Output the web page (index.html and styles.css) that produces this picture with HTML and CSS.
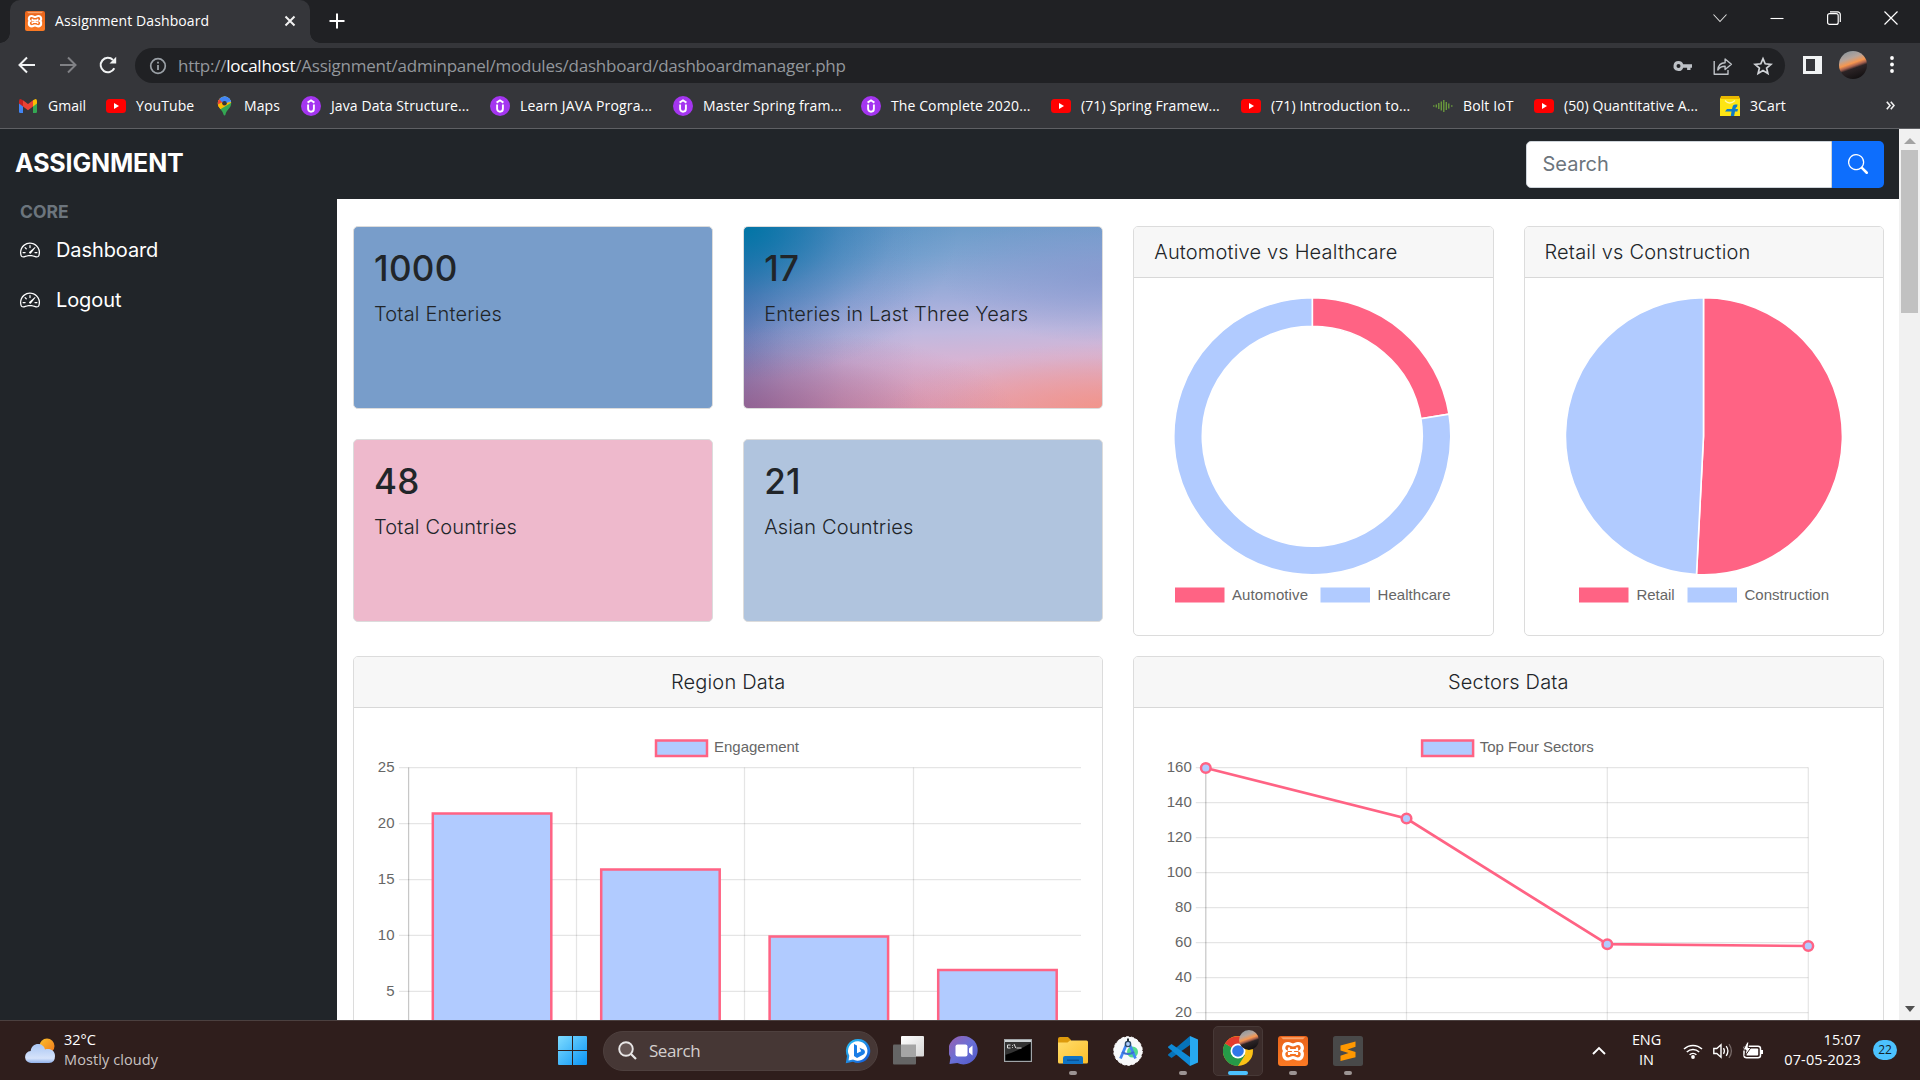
FILE: index.html
```
<!DOCTYPE html>
<html lang="en">
<head>
<meta charset="utf-8">
<title>Assignment Dashboard</title>
<link rel="stylesheet" href="styles.css">
</head>
<body>
<svg class="defs" width="0" height="0" aria-hidden="true">
  <defs>
    <linearGradient id="g-orange" x1="0" y1="0" x2="0" y2="1"><stop offset="0" stop-color="#e9631a"/><stop offset="1" stop-color="#fb7a24"/></linearGradient>
    <linearGradient id="g-win" x1="0" y1="0" x2="1" y2="1"><stop offset="0" stop-color="#7fdcff"/><stop offset="1" stop-color="#0a94f5"/></linearGradient>
    <linearGradient id="g-bing" x1="0" y1="0" x2="1" y2="1"><stop offset="0" stop-color="#29c5f6"/><stop offset="1" stop-color="#1450d2"/></linearGradient>
    <linearGradient id="g-chat" x1="0" y1="0" x2="1" y2="1"><stop offset="0" stop-color="#9a5fae"/><stop offset=".5" stop-color="#6a70d6"/><stop offset="1" stop-color="#4f57c8"/></linearGradient>
    <linearGradient id="g-folder" x1="0" y1="0" x2="1" y2="1"><stop offset="0" stop-color="#ffdc6b"/><stop offset="1" stop-color="#fcbf2a"/></linearGradient>
    <linearGradient id="g-white" x1="0" y1="0" x2="1" y2="1"><stop offset="0" stop-color="#ffffff"/><stop offset="1" stop-color="#d5d5d5"/></linearGradient>
    <linearGradient id="g-sun" x1="0" y1="0" x2="1" y2="1"><stop offset="0" stop-color="#fcc02c"/><stop offset="1" stop-color="#f0761a"/></linearGradient>
    <linearGradient id="g-cloud" x1="0" y1="0" x2="0" y2="1"><stop offset="0" stop-color="#a9c6f4"/><stop offset=".75" stop-color="#d6e3fa"/><stop offset="1" stop-color="#8fb0ea"/></linearGradient>
    <linearGradient id="g-sunset" x1=".45" y1="0" x2=".55" y2="1"><stop offset=".12" stop-color="#8d979d"/><stop offset=".3" stop-color="#b5a49b"/><stop offset=".43" stop-color="#f7964e"/><stop offset=".5" stop-color="#a5604e"/><stop offset=".56" stop-color="#2c2426"/><stop offset=".9" stop-color="#0b0a0b"/></linearGradient>
    <symbol id="xampp" viewBox="0 0 30 30">
      <rect width="30" height="30" rx="3" fill="url(#g-orange)"/><path d="M3 1.200h24l-2 2H5z" fill="#f9a36b"/>
      <path d="M10 7.500c2.500 0 3.300 1.500 5 1.500s2.500-1.500 5-1.500c5 0 5.200 6 2.800 7.500 2.400 1.500 2.200 8-2.800 8-2.500 0-3.300-1.500-5-1.500s-2.500 1.500-5 1.500c-5 0-5.200-6.500-2.800-8C4.800 13.500 5 7.500 10 7.500z" fill="none" stroke="#fff" stroke-width="3.200"/>
      <path d="M11 11.500v2.500h8v-2.500M15 14v3M11 19v-2h8v2" fill="none" stroke="#fff" stroke-width="2.200"/>
    </symbol>
    <symbol id="yt" viewBox="0 0 20 20"><rect y="3" width="20" height="14" rx="3.500" fill="#f00"/><path d="M8 7l5 3-5 3z" fill="#fff"/></symbol>
    <symbol id="udemy" viewBox="0 0 20 20"><circle cx="10" cy="10" r="10" fill="#a435f0"/><path d="M6.600 6.600L10 4.300l3.400 2.300M7.100 8.600v4.200a2.900 2.900 0 0 0 5.800 0V8.600" fill="none" stroke="#fff" stroke-width="1.900"/></symbol>
    <symbol id="gmail" viewBox="0 0 20 20"><path d="M1 5v10.800q0 1.200 1.200 1.200H5V8z" fill="#4285f4"/><path d="M19 5v10.800q0 1.200-1.200 1.200H15V8z" fill="#34a853"/><path d="M15 4.300L17 3.200q2-.5 2 2V7.500L15 10.500z" fill="#fbbc04"/><path d="M5 4.300L10 8l5-3.700v6.200L10 14.200 5 10.500z" fill="#ea4335"/><path d="M5 4.300L3 3.200Q1 2.700 1 5.200V7.500l4 3z" fill="#c5221f"/></symbol>
    <symbol id="maps" viewBox="0 0 20 20">
      <clipPath id="pin"><path d="M10.500 .5a6.700 6.700 0 0 1 6.700 6.700c0 5-5 6.500-5.700 11.300-.2 1.300-1.700 1.300-2 0C8.700 13.700 3.800 12.200 3.800 7.200A6.700 6.700 0 0 1 10.500.5z"/></clipPath>
      <g clip-path="url(#pin)"><path d="M0 0h20v20H0z" fill="#34a853"/><path d="M0 0h20v5L5 14H0z" fill="#fbbc04"/><path d="M4 0h16v6l-3-1-7 3z" fill="#4285f4"/><path d="M10 0h8v6l-6 .5z" fill="#5b9af7"/><path d="M0 2l5 0 6 6-5 4-6-5z" fill="#ea4335"/><path d="M3 9l3.500 4 4-5-3-1.500z" fill="#fbbc04"/><path d="M5 3L12 0l6 4-7.500 3L8 6z" fill="#4285f4"/></g><circle cx="10.500" cy="7.200" r="2.300" fill="#35363a"/>
    </symbol>
    <symbol id="bolt" viewBox="0 0 20 20"><path d="M.8 9.300v1.400M3.300 8.500v3M5.800 7v6M8.300 5.500v9M10.800 4v12M13.300 6v8M15.800 7.500v5M18.800 9.300v1.400" stroke="#6da03c" stroke-width="1.300"/></symbol>
    <symbol id="flip" viewBox="0 0 20 20"><path d="M0 2h20v18H0z" fill="#fde514"/><path d="M1 0h18l1 3H0z" fill="#e9b800"/><path d="M5 4.500q4.500 5 10 0" stroke="#fff6a8" stroke-width="1.300" fill="none"/><path d="M17.500 8.500h-2.200q-2.500 0-2.900 3L12 13H7l-2 2.500h6.500L10.800 20h3.300l.9-4.500h2.400l.6-2.500h-2.500q.2-2 1.500-2z" fill="#0f7ac6"/></symbol>
    <symbol id="gauge" viewBox="0 0 16 16"><path d="M8 4a.5.5 0 0 1 .5.5V6a.5.5 0 0 1-1 0V4.500A.5.5 0 0 1 8 4zM3.732 5.732a.5.5 0 0 1 .707 0l.915.914a.5.5 0 1 1-.708.708l-.914-.915a.5.5 0 0 1 0-.707zM2 10a.5.5 0 0 1 .5-.5h1.586a.5.5 0 0 1 0 1H2.500A.5.5 0 0 1 2 10zm9.500 0a.5.5 0 0 1 .5-.5h1.500a.5.5 0 0 1 0 1H12a.5.5 0 0 1-.5-.5zm.754-4.246a.389.389 0 0 0-.527-.02L7.547 9.310a.91.91 0 1 0 1.302 1.258l3.434-4.297a.389.389 0 0 0-.029-.518z"/><path fill-rule="evenodd" d="M0 10a8 8 0 1 1 15.547 2.661c-.442 1.253-1.845 1.602-2.932 1.250C11.309 13.488 9.475 13 8 13c-1.474 0-3.310.488-4.615.911-1.087.352-2.490.003-2.932-1.250A7.988 7.988 0 0 1 0 10zm8-7a7 7 0 0 0-6.603 9.329c.203.575.923.876 1.680.63C4.397 12.533 6.358 12 8 12s3.604.532 4.923.96c.757.245 1.477-.056 1.680-.631A7 7 0 0 0 8 3z"/></symbol>
  </defs>
</svg>

<header class="browser">
  <div class="tabstrip">
    <div class="tab">
      <svg class="favicon" width="20" height="20"><use href="#xampp"/></svg>
      <span class="tab-title">Assignment Dashboard</span>
      <svg class="tab-close" width="12" height="12" viewBox="0 0 12 12"><path d="M1.500 1.500l9 9M10.500 1.500l-9 9" stroke="#f1f1f1" stroke-width="2"/></svg>
    </div>
    <svg class="newtab" width="16" height="16" viewBox="0 0 16 16"><path d="M8 .5v15M.5 8h15" stroke="#fff" stroke-width="2"/></svg>
    <div class="wincontrols">
      <svg width="14" height="14" viewBox="0 0 14 14"><path d="M.5 3.500l6.500 7 6.500-7" fill="none" stroke="#ddd" stroke-width="1.100"/></svg>
      <svg width="14" height="14" viewBox="0 0 14 14"><path d="M.5 7.500h13" stroke="#fff" stroke-width="1.100"/></svg>
      <svg width="14" height="14" viewBox="0 0 14 14"><rect x=".6" y="2.600" width="10.600" height="10.800" rx="2" fill="none" stroke="#fff" stroke-width="1.200"/><path d="M3 .8h7.500a2.800 2.800 0 0 1 2.800 2.800v7.500" fill="none" stroke="#fff" stroke-width="1.200"/></svg>
      <svg width="14" height="14" viewBox="0 0 14 14"><path d="M.5.500l13 13M13.500.500l-13 13" stroke="#fff" stroke-width="1.200"/></svg>
    </div>
  </div>
  <div class="toolbar">
    <svg width="18" height="18" viewBox="0 0 18 18"><path d="M17 9H2M9 1.500L1.500 9 9 16.500" fill="none" stroke="#f1f3f4" stroke-width="2"/></svg>
    <svg width="18" height="18" viewBox="0 0 18 18"><path d="M1 9h15M9 1.500L16.500 9 9 16.500" fill="none" stroke="#808185" stroke-width="2"/></svg>
    <svg width="18" height="18" viewBox="0 0 18 18"><path d="M15.300 12.300A7.200 7.200 0 1 1 14 4" fill="none" stroke="#f1f3f4" stroke-width="2"/><path d="M17.200 .8v6.700h-6.700z" fill="#f1f3f4"/></svg>
    <div class="omnibox">
      <svg width="18" height="18" viewBox="0 0 18 18"><circle cx="9" cy="9" r="7.300" fill="none" stroke="#9aa0a6" stroke-width="1.700"/><path d="M9 8v5M9 4.800v1.800" stroke="#9aa0a6" stroke-width="1.800"/></svg>
      <span class="url">http://<b>localhost</b>/Assignment/adminpanel/modules/dashboard/dashboardmanager.php</span>
      <div class="omni-icons">
        <svg width="20" height="20" viewBox="0 0 20 20"><path fill-rule="evenodd" d="M5.500 5a5 5 0 0 1 4.700 3.300H19v3.400h-1.500V14h-3.400v-2.300h-3.900A5 5 0 1 1 5.500 5zm0 3a2 2 0 1 0 0 4 2 2 0 0 0 0-4z" fill="#bdc1c6"/></svg>
        <svg width="20" height="20" viewBox="0 0 20 20"><path d="M1.200 5v13.200H15V14M4.800 14c.4-5 3-7.200 7.300-7.300V3l6.300 5.300-6.300 5.200v-3.300c-3.500 0-5.500 1-7.300 3.800z" fill="none" stroke="#bdc1c6" stroke-width="1.400" stroke-linejoin="round"/></svg>
        <svg width="20" height="20" viewBox="0 0 20 20"><path d="M10 2.600l2.200 5.200 5.700.5-4.300 3.700 1.300 5.500L10 14.600l-4.900 2.900L6.400 12 2.100 8.300l5.700-.5z" fill="none" stroke="#d0d3d7" stroke-width="1.700"/></svg>
      </div>
    </div>
    <svg class="panel" width="19" height="18" viewBox="0 0 19 18"><path fill-rule="evenodd" d="M0 0h19v18H0zM3 3v12h9V3z" fill="#f1f3f4"/></svg>
    <svg class="avatar" width="28" height="28" viewBox="0 0 28 28"><clipPath id="av"><circle cx="14" cy="14" r="14"/></clipPath><g clip-path="url(#av)"><rect x="-8" y="-6" width="44" height="42" fill="url(#g-sunset)" transform="rotate(-14 14 14)"/></g></svg>
    <svg class="dots" width="4" height="17" viewBox="0 0 4 17"><circle cx="2" cy="2" r="1.900" fill="#fff"/><circle cx="2" cy="8.500" r="1.900" fill="#fff"/><circle cx="2" cy="15" r="1.900" fill="#fff"/></svg>
  </div>
  <nav class="bookmarks">
    <span class="bm"><svg><use href="#gmail"/></svg>Gmail</span>
    <span class="bm"><svg><use href="#yt"/></svg>YouTube</span>
    <span class="bm"><svg><use href="#maps"/></svg>Maps</span>
    <span class="bm"><svg><use href="#udemy"/></svg>Java Data Structure...</span>
    <span class="bm"><svg><use href="#udemy"/></svg>Learn JAVA Progra...</span>
    <span class="bm"><svg><use href="#udemy"/></svg>Master Spring fram...</span>
    <span class="bm"><svg><use href="#udemy"/></svg>The Complete 2020...</span>
    <span class="bm"><svg><use href="#yt"/></svg>(71) Spring Framew...</span>
    <span class="bm"><svg><use href="#yt"/></svg>(71) Introduction to...</span>
    <span class="bm"><svg><use href="#bolt"/></svg>Bolt IoT</span>
    <span class="bm"><svg><use href="#yt"/></svg>(50) Quantitative A...</span>
    <span class="bm"><svg><use href="#flip"/></svg>3Cart</span>
    <svg class="more" width="9" height="9" viewBox="0 0 9 9"><path d="M.8.800l3.200 3.700L.8 8.200M4.800.800L8 4.500 4.800 8.200" fill="none" stroke="#f1f1f1" stroke-width="1.600"/></svg>
  </nav>
</header>

<div class="viewport">
  <div class="page">
    <div class="navbar">
      <span class="brand">ASSIGNMENT</span>
      <div class="search">
        <div class="search-input">Search</div>
        <div class="search-btn"><svg width="20" height="20" viewBox="0 0 16 16" fill="#fff"><path fill-rule="evenodd" d="M11.742 10.344a6.500 6.500 0 1 0-1.397 1.398h-.001c.03.04.062.078.098.115l3.850 3.850a1 1 0 0 0 1.415-1.414l-3.850-3.850a1.007 1.007 0 0 0-.115-.1zM12 6.500a5.500 5.500 0 1 1-11 0 5.500 5.500 0 0 1 11 0z"/></svg></div>
      </div>
    </div>
    <div class="columns">
      <aside class="sidebar">
        <div class="side-head">CORE</div>
        <div class="side-link"><svg width="20" height="20" fill="#fff"><use href="#gauge"/></svg>Dashboard</div>
        <div class="side-link"><svg width="20" height="20" fill="#fff"><use href="#gauge"/></svg>Logout</div>
      </aside>
      <main class="content">
        <div class="row top">
          <div class="stats">
            <div class="card stat blue"><h3>1000</h3><p>Total Enteries</p></div>
            <div class="card stat sky"><h3>17</h3><p>Enteries in Last Three Years</p></div>
            <div class="card stat pink"><h3>48</h3><p>Total Countries</p></div>
            <div class="card stat steel"><h3>21</h3><p>Asian Countries</p></div>
          </div>
          <div class="card pie">
            <div class="card-header">Automotive vs Healthcare</div>
            <svg class="chart" width="358" height="357" viewBox="0 0 358 357">
              <g stroke="#fff" stroke-width="1.600" transform="translate(-.7 -.7)">
                <path d="M179 20.500A138.500 138.500 0 0 1 315.720 136.860L287.590 141.420A110 110 0 0 0 179 49z" fill="#ff6384"/>
                <path d="M315.720 136.860A138.500 138.500 0 1 1 179 20.500V49A110 110 0 1 0 287.590 141.420z" fill="#b1cbff"/>
              </g>
              <rect x="41" y="309.500" width="49.500" height="15" fill="#ff6384"/><text x="98" y="321.500" textLength="76">Automotive</text>
              <rect x="186.500" y="309.500" width="49.500" height="15" fill="#b1cbff"/><text x="243.500" y="321.500" textLength="73">Healthcare</text>
            </svg>
          </div>
          <div class="card pie">
            <div class="card-header">Retail vs Construction</div>
            <svg class="chart" width="358" height="357" viewBox="0 0 358 357">
              <g stroke="#fff" stroke-width="1.600" transform="translate(-.5 -.7)">
                <path d="M179 159V20.500A138.500 138.500 0 1 1 172 297.300z" fill="#ff6384"/>
                <path d="M179 159L172 297.300A138.500 138.500 0 0 1 179 20.500z" fill="#b1cbff"/>
              </g>
              <rect x="54" y="309.500" width="49.500" height="15" fill="#ff6384"/><text x="111.500" y="321.500" textLength="38">Retail</text>
              <rect x="162.500" y="309.500" width="49.500" height="15" fill="#b1cbff"/><text x="219.500" y="321.500" textLength="84.500">Construction</text>
            </svg>
          </div>
        </div>
        <div class="row bottom">
          <div class="card wide">
            <div class="card-header center">Region Data</div>
            <svg class="chart" width="748" height="420" viewBox="0 0 748 420">
              <rect x="302" y="32.500" width="51" height="15.500" fill="#b1cbff" stroke="#ff6384" stroke-width="2.500"/><text x="360" y="44" textLength="85">Engagement</text>
              <g stroke="#000" stroke-opacity=".1" stroke-width="1.250">
                <path d="M45 59.500h682M45 115.500h682M45 171.500h682M45 227.300h682M45 283.300h682M45 339.300h682"/>
                <path d="M222.500 59.500v290M390.500 59.500v290M559.500 59.500v290"/><path d="M54.600 59.500v290" stroke-opacity=".22"/>
              </g>
              <g fill="#b1cbff" stroke="#ff6384" stroke-width="2.500">
                <rect x="78.800" y="105.500" width="118.500" height="300"/><rect x="247.200" y="161.500" width="118.500" height="300"/><rect x="415.600" y="228.500" width="118.500" height="300"/><rect x="584.200" y="262" width="118.500" height="300"/>
              </g>
              <g text-anchor="end"><text x="40.500" y="64">25</text><text x="40.500" y="120">20</text><text x="40.500" y="175.500">15</text><text x="40.500" y="231.500">10</text><text x="40.500" y="287.500">5</text></g>
            </svg>
          </div>
          <div class="card wide">
            <div class="card-header center">Sectors Data</div>
            <svg class="chart" width="748" height="420" viewBox="-.8 0 748 420">
              <rect x="287.300" y="32.500" width="51" height="15.500" fill="#b1cbff" stroke="#ff6384" stroke-width="2.500"/><text x="345" y="44" textLength="114">Top Four Sectors</text>
              <g stroke="#000" stroke-opacity=".1" stroke-width="1.250">
                <path d="M61 59.500h612.500M61 94.600h612.500M61 129.600h612.500M61 164.600h612.500M61 199.600h612.500M61 234.600h612.500M61 269.500h612.500M61 304.500h612.500"/>
                <path d="M271.700 59.500v290M472.500 59.500v290M673.500 59.500v290"/><path d="M71 59.500v290" stroke-opacity=".22"/>
              </g>
              <path d="M71 60L271.700 110.500 472.500 236.200 673.500 238" fill="none" stroke="#ff6384" stroke-width="2.700"/>
              <g fill="#b1cbff" stroke="#ff6384" stroke-width="2.500"><circle cx="71" cy="60" r="4.800"/><circle cx="271.700" cy="110.500" r="4.800"/><circle cx="472.500" cy="236.200" r="4.800"/><circle cx="673.500" cy="238" r="4.800"/></g>
              <g text-anchor="end"><text x="57" y="64">160</text><text x="57" y="99">140</text><text x="57" y="134">120</text><text x="57" y="168.500">100</text><text x="57" y="203.500">80</text><text x="57" y="238.500">60</text><text x="57" y="273.500">40</text><text x="57" y="308.500">20</text></g>
            </svg>
          </div>
        </div>
      </main>
    </div>
  </div>
  <div class="scrollbar">
    <svg width="12" height="6" viewBox="0 0 12 6"><path d="M6 0l6 6H0z" fill="#a3a3a3"/></svg>
    <div class="thumb"></div>
    <svg class="down" width="10" height="6" viewBox="0 0 10 6"><path d="M0 0h10L5 6z" fill="#505050"/></svg>
  </div>
</div>

<footer class="taskbar">
  <div class="weather">
    <svg width="31" height="26" viewBox="0 0 31 26"><circle cx="22" cy="8" r="7.500" fill="url(#g-sun)"/><path d="M6.500 25a6 6 0 0 1-.8-12C6.500 4 18.500 4 20 11.500c5-1.500 10 1 10 6.500q0 7-6 7z" fill="url(#g-cloud)"/></svg>
    <div class="weather-text"><span>32°C</span><span class="dim">Mostly cloudy</span></div>
  </div>
  <div class="apps">
    <div class="slot"><svg width="29" height="29" viewBox="0 0 29 29"><path d="M0 1q0-1 1-1h13v14H0zM15 0h13q1 0 1 1v13H15zM0 15h14v14H1q-1 0-1-1zM15 15h14v13q0 1-1 1H15z" fill="url(#g-win)"/></svg></div>
    <div class="tasksearch">
      <svg width="19" height="19" viewBox="0 0 19 19"><circle cx="8" cy="8" r="6.800" fill="#655654" stroke="#e8e6e6" stroke-width="1.900"/><path d="M13 13l5 5" stroke="#e8e6e6" stroke-width="2.200"/></svg>
      <span>Search</span>
      <svg width="26" height="26" viewBox="0 0 26 26"><path d="M13.500 1A12 12 0 1 1 8 23.800L.8 25.200 2 18A12 12 0 0 1 13.500 1z" fill="url(#g-bing)"/><path d="M13.500 3.200A9.800 9.800 0 1 1 8 21.600l-4.500 1 .8-4.800A9.800 9.800 0 0 1 13.500 3.200z" fill="#fff"/><path d="M9 6l3 1.500v7.800l4.200-2-1.700-3.500 4.500 2q2.200 2.800-.5 4.700L12 20l-3-2z" fill="#1a7de6"/></svg>
    </div>
    <div class="slot"><svg width="31" height="29" viewBox="0 0 31 29"><rect y="8.500" width="23" height="20" rx="1" fill="#656565"/><rect x="8" y="0" width="23" height="20.500" rx="1" fill="url(#g-white)"/><path d="M8 8.500h15v12H8z" fill="#a5a5a5"/></svg></div>
    <div class="slot"><svg width="29" height="29" viewBox="0 0 29 29"><path d="M14.500 0a14.200 14.200 0 1 1-6.200 27L.5 28 1.500 21.500A14.200 14.200 0 0 1 14.500 0z" fill="url(#g-chat)"/><rect x="6.500" y="8.500" width="12" height="12" rx="2" fill="#fff"/><path d="M20 12.500l3.500-3v10l-3.500-3z" fill="#fff"/></svg></div>
    <div class="slot"><svg width="28" height="23" viewBox="0 0 28 23"><rect x=".6" y=".6" width="26.800" height="21.800" fill="#000" stroke="#a0a5a8" stroke-width="1.200"/><path d="M1 1h26v2H1z" fill="#cdd2d4"/><path d="M1 16Q12 13 27 4V3H1z" fill="#333"/><path d="M3.500 6h3M3.500 6v3h3M8.500 6v.8M8.500 8.200V9M10 5l1.800 4M12.500 9h5" stroke="#ddd" fill="none"/></svg></div>
    <div class="slot run"><svg width="30" height="27" viewBox="0 0 30 27"><path d="M0 2q0-2 2-2h8l3 3v5H0z" fill="#dd9a0c"/><path d="M0 5.500h9.500L12 3.500h16.500q1.500 0 1.500 1.500v20q0 1.500-1.500 1.500h-27Q0 26.500 0 25z" fill="url(#g-folder)"/><path d="M5 27v-6q0-2 2-2h16q2 0 2 2v6z" fill="#0f73c4"/><path d="M9 23.200h12" stroke="#0a4f90" stroke-width="1.300"/></svg></div>
    <div class="slot"><svg width="30" height="30" viewBox="0 0 30 30"><circle cx="15" cy="15" r="14.300" fill="#f7f8f9" stroke="#fff" stroke-dasharray="3 2"/><circle cx="19.500" cy="16" r="5.500" fill="#52d98c"/><path d="M13.800 7.500L7.500 22.500M16.200 7.500l6.300 15" stroke="#4285f4" stroke-width="2.800"/><path d="M9 16q6 4 12 0" stroke="#3a6fd0" stroke-width="2" fill="none"/><circle cx="15" cy="8" r="2.600" fill="#aecbfa" stroke="#2a4a68" stroke-width="1.400"/><path d="M15 2.500v3" stroke="#263238" stroke-width="2"/></svg></div>
    <div class="slot run"><svg width="30" height="30" viewBox="0 0 30 30"><path d="M22 0l8 3.500v23L22 30z" fill="#27a9f1"/><path d="M22 0v9L3.500 22 .3 19.600q-.6-.7 0-1.400z" fill="#0672b8"/><path d="M22 30v-9L3.500 8 .3 10.400q-.6.700 0 1.400z" fill="#0f8ad6"/></svg></div>
    <div class="slot active"><svg width="36" height="36" viewBox="0 0 36 36"><g transform="translate(0 6)"><circle cx="15" cy="15" r="15" fill="#fbc116"/><path d="M15 15L2 7.500A15 15 0 0 0 15 30l7-11z" fill="#269a48"/><path d="M15 15L2 7.500A15 15 0 0 1 28 8H15z" fill="#e33b2e"/><circle cx="15" cy="15" r="7.500" fill="#fff"/><circle cx="15" cy="15" r="5.800" fill="#3077e8"/></g><g transform="translate(16 0) scale(.71)" clip-path="url(#av)"><rect x="-8" y="-6" width="44" height="42" fill="url(#g-sunset)" transform="rotate(-14 14 14)"/></g></svg></div>
    <div class="slot run"><svg width="30" height="30"><use href="#xampp"/></svg></div>
    <div class="slot run"><svg width="30" height="30" viewBox="0 0 30 30"><rect width="30" height="30" rx="2.500" fill="#494949"/><path d="M22.500 5.500v5.300L14.500 13.500l8 2.500v5.300L7.500 25v-5.200l8-2.700-8-2.600V9.500z" fill="#ff9800"/></svg></div>
  </div>
  <div class="tray">
    <svg class="chev" width="14" height="9" viewBox="0 0 14 9"><path d="M1 8l6-6 6 6" fill="none" stroke="#fff" stroke-width="1.900"/></svg>
    <div class="lang"><span>ENG</span><span>IN</span></div>
    <svg class="wifi" width="20" height="16" viewBox="0 0 20 16"><path d="M1 6a13 13 0 0 1 18 0M3.800 9a9 9 0 0 1 12.400 0M6.600 11.800a5 5 0 0 1 6.800 0" fill="none" stroke="#fff" stroke-width="1.500"/><circle cx="10" cy="14" r="1.900" fill="#fff"/></svg>
    <svg class="vol" width="20" height="16" viewBox="0 0 20 16"><path d="M.8 5.500h3L8 1.800v12.400L3.800 10.500h-3z" fill="none" stroke="#fff" stroke-width="1.400"/><path d="M10.500 5.200q1.800 2.800 0 5.600M13.200 3.200q3.400 4.800 0 9.600" fill="none" stroke="#fff" stroke-width="1.300"/><path d="M16 1.200q4.800 6.800 0 13.600" fill="none" stroke="#776a68" stroke-width="1.300"/></svg>
    <svg class="batt" width="21" height="17" viewBox="0 0 21 17"><rect x="1" y="4.200" width="16.500" height="11.500" rx="2.500" fill="none" stroke="#fff" stroke-width="1.500"/><rect x="3.200" y="6.400" width="12" height="7.200" rx="1" fill="#fff"/><path d="M18 8h2v4h-2z" fill="#fff"/><path d="M4 0L0 8h3l-1 6 6-8.500H5L6 0z" fill="#fff" stroke="#2f1e1c"/></svg>
    <div class="clock"><span>15:07</span><span>07-05-2023</span></div>
    <span class="badge">22</span>
  </div>
</footer>
</body>
</html>
```
FILE: styles.css
```
* { box-sizing: border-box; }
body { margin: 0; width: 1920px; height: 1080px; overflow: hidden; display: flex; flex-direction: column; font-family: "Open Sans", "Noto Sans", sans-serif; background: #212529; }
svg { display: block; flex: none; }
.defs { position: absolute; }

/* browser chrome */
.browser { height: 129px; background: #35363a; border-bottom: 1px solid #5f6064; color: #f1f3f4; font-size: 14px; letter-spacing: .1px; flex: none; }
.tabstrip { height: 43px; background: #202124; display: flex; align-items: center; padding-left: 10px; }
.tab { width: 300px; height: 43px; background: #35363a; border-radius: 10px 10px 0 0; display: flex; align-items: center; padding: 0 14px 1px 15px; position: relative; }
.tab::before, .tab::after { content: ""; position: absolute; bottom: 0; width: 10px; height: 10px; }
.tab::before { left: -10px; background: radial-gradient(circle at 0 0, transparent 9.500px, #35363a 10px); }
.tab::after { right: -10px; background: radial-gradient(circle at 100% 0, transparent 9.500px, #35363a 10px); }
.tab-title { margin-left: 10px; flex: 1; color: #fff; padding-bottom: 2px; }
.newtab { margin: 0 0 1px 19px; }
.wincontrols { display: flex; gap: 43px; margin-left: auto; padding: 0 22px 7px 0; }
.toolbar { height: 43px; display: flex; align-items: center; padding-left: 18px; }
.toolbar > svg + svg { margin-left: 22.500px; }
.omnibox { width: 1650px; height: 35px; margin-left: 18px; margin-top: 2px; background: #202124; border-radius: 18px; display: flex; align-items: center; padding: 0 12px 0 13.500px; }
.url { margin-left: 11.500px; font-size: 17px; letter-spacing: -.24px; color: #93979c; }
.url b { font-weight: 400; color: #fff; }
.omni-icons { margin-left: auto; display: flex; gap: 20px; }
.toolbar > .panel { margin-left: 18px; }
.toolbar > .avatar { margin-left: 17px; }
.toolbar > .dots { margin-left: 23px; }
.bookmarks { height: 42px; display: flex; align-items: center; padding: 0 25px 4px 18px; color: #fff; }
.bm { display: flex; align-items: center; width: 188px; white-space: nowrap; }
.bm svg { width: 20px; height: 20px; margin-right: 10px; position: relative; top: 1px; }
.bm:nth-child(1) { width: 88px; letter-spacing: 0; }
.bm:nth-child(2) { width: 108px; }
.bm:nth-child(3) { width: 87px; }
.bm:nth-child(4) { width: 189px; }
.bm:nth-child(5) { width: 183px; letter-spacing: .15px; }
.bm:nth-child(7), .bm:nth-child(8) { width: 190px; }
.bm:nth-child(9) { width: 192px; }
.bm:nth-child(10) { width: 101px; }
.bm:nth-child(11) { width: 186px; }
.bm:nth-child(12) { width: 80px; }
.more { margin-left: auto; }

/* dashboard */
.viewport { height: 891px; display: flex; flex: none; overflow: hidden; }
.page { width: 1899px; font: 400 20px/30px "Inter", sans-serif; color: #212529; }
.navbar { height: 70px; background: #212529; display: flex; align-items: center; justify-content: space-between; padding: 0 15px; }
.brand { color: #fff; font-weight: 700; font-size: 25px; letter-spacing: -.15px; padding-bottom: 2px; }
.search { display: flex; width: 358px; height: 47px; }
.search-input { flex: 1; background: #fff; border: 1px solid #ced4da; border-radius: 5px 0 0 5px; color: #6c757d; padding: 7.500px 15.500px; }
.search-btn { width: 52px; background: #0d6efd; border-radius: 0 5px 5px 0; display: flex; align-items: center; justify-content: center; }
.columns { display: flex; height: 821px; }
.sidebar { width: 337px; background: #212529; color: #fff; padding: 0 20px; }
.side-head { font-size: 17.500px; line-height: 26px; font-weight: 700; color: #6c757d; }
.side-link { display: flex; align-items: center; gap: 16px; height: 50px; letter-spacing: -.1px; }
.content { width: 1562px; background: #fff; padding: 27px 15px 0 16px; overflow: hidden; }
.row { display: flex; gap: 30px; }
.top { height: 409.500px; margin-bottom: 20.500px; }
.stats { width: 750.250px; display: grid; grid-template-columns: 1fr 1fr; grid-template-rows: 183px 183px; gap: 30px; }
.card { border: 1px solid #dcdcdc; border-radius: 5px; background: #fff; font-weight: 300; letter-spacing: .18px; overflow: hidden; }
.stat { padding: 20px; }
.stat h3 { margin: 0 0 10px; font-size: 35px; line-height: 42px; font-weight: 500; letter-spacing: .35px; }
.stat p { margin: 0; }
.blue { background: #789dca; }
.pink { background: #eeb9cc; }
.steel { background: #b0c4de; }
.sky {
  background:
    radial-gradient(ellipse 60% 85% at 0 0, rgba(0, 118, 166, 1) 0, rgba(0, 116, 168, .72) 20%, rgba(0, 112, 170, .36) 45%, rgba(0, 110, 175, .12) 70%, rgba(0, 110, 175, 0) 100%),
    radial-gradient(ellipse 75% 45% at 0 100%, rgba(150, 92, 140, .75) 0, rgba(160, 98, 145, .45) 35%, rgba(170, 105, 155, .15) 70%, rgba(170, 110, 160, 0) 100%),
    linear-gradient(90deg, rgba(62, 86, 158, .58) 0, rgba(75, 95, 165, .36) 12%, rgba(90, 105, 175, .14) 28%, rgba(100, 110, 185, 0) 48%),
    radial-gradient(ellipse 60% 36% at 100% 100%, rgba(243, 148, 136, .9) 0, rgba(243, 150, 138, .5) 40%, rgba(243, 155, 145, .12) 78%, rgba(243, 155, 145, 0) 100%),
    radial-gradient(ellipse 45% 38% at 100% 26%, rgba(134, 150, 206, .7) 0, rgba(134, 150, 206, .35) 50%, rgba(134, 150, 206, 0) 100%),
    linear-gradient(178deg, #689ac8 0, #7ca3d0 18%, #a3aedb 42%, #c0b9df 58%, #d6b4d4 72%, #e0a8c0 87%, #e49cac 100%);
  background-origin: border-box;
}
.pie { width: 360.250px; flex: none; }
.wide { width: 750.250px; height: 480px; flex: none; }
.card-header { height: 51px; padding: 10px 20px; background: #f7f7f7; border-bottom: 1px solid #d8d8d8; }
.center { text-align: center; }
.chart text { font: 400 15px "Liberation Sans", Arial, sans-serif; letter-spacing: 0; fill: #666; }
.scrollbar { width: 21px; background: #f1f1f1; display: flex; flex-direction: column; align-items: center; padding: 9px 0 8px; }
.thumb { width: 17px; height: 163px; background: #c1c1c1; margin-top: 6px; }
.down { margin-top: auto; }

/* taskbar */
.taskbar { height: 60px; background: #2f1e1c; border-top: 1px solid #4b403f; color: #fff; font-size: 14.500px; line-height: 20px; display: grid; grid-template-columns: 545px 830px 1fr; flex: none; }
.weather { display: flex; align-items: center; padding-left: 25px; gap: 8px; }
.weather-text { display: flex; flex-direction: column; padding-bottom: 2px; }
.dim { color: #c9c3c2; letter-spacing: .1px; }
.apps { display: flex; align-items: center; }
.slot { width: 55px; height: 50px; display: flex; align-items: center; justify-content: center; position: relative; }
.tasksearch { width: 275px; height: 40px; border-radius: 20px; background: #463735; border: 1px solid #4e403e; margin: 0 2.500px 0 3.500px; display: flex; align-items: center; padding: 0 6px 0 13.500px; font-size: 17px; color: #d4cfce; letter-spacing: -.4px; }
.tasksearch span { flex: 1; margin-left: 12px; }
.run::after, .active::after { content: ""; position: absolute; left: 50%; bottom: 1px; width: 8px; height: 4px; margin-left: -4px; border-radius: 2px; background: #9c9493; }
.active { width: 50px; margin: 0 2.500px; background: #3c2c2a; border: 1px solid #473937; border-radius: 5px; }
.active::after { width: 20px; margin-left: -10px; bottom: 0; background: #4cc2ff; }
.active svg { margin: -6px 0 0 6px; }
.tray { display: flex; align-items: center; justify-content: flex-end; padding-right: 23px; }
.lang { width: 40px; margin: 0 16.500px 0 21px; text-align: center; display: flex; flex-direction: column; letter-spacing: -.1px; padding-bottom: 1px; }
.wifi { margin-right: 10px; }
.vol { margin-right: 10px; }
.clock { width: 97px; display: flex; flex-direction: column; text-align: right; letter-spacing: .1px; padding-bottom: 2px; }
.badge { width: 24px; height: 20px; margin: 0 0 2px 12px; border-radius: 10px; background: #4cc2ff; color: #14222b; font-size: 12px; text-align: center; }
```
